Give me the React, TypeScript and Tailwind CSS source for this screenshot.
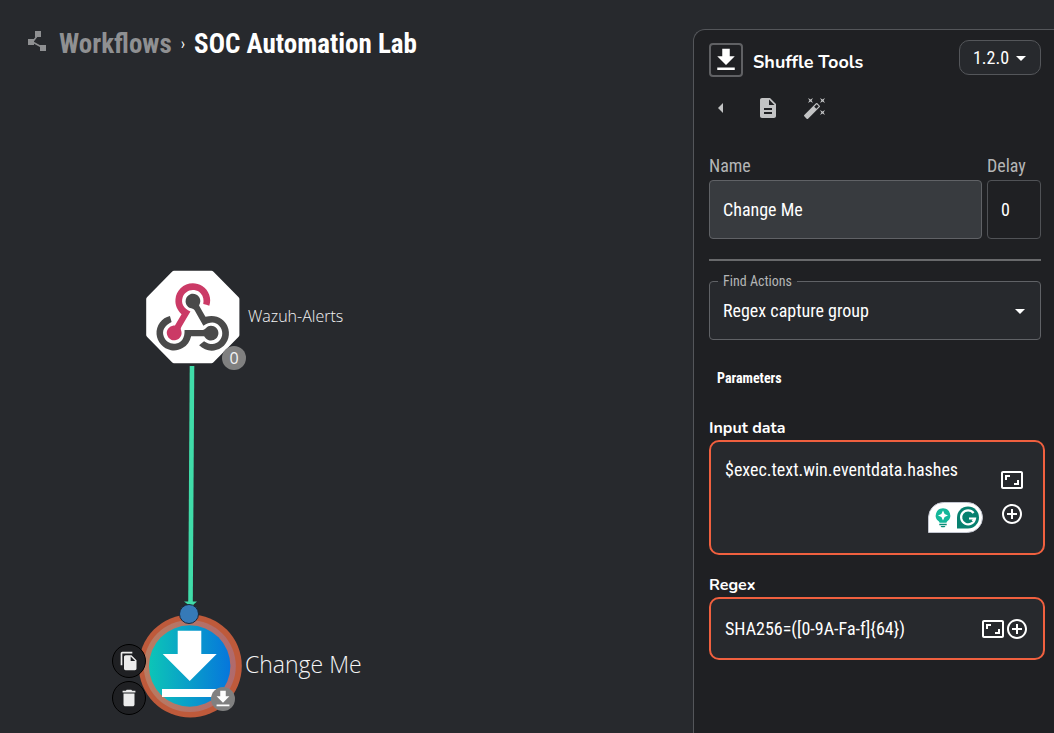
import type { ReactNode } from "react";
import {
  MdArrowDropDown,
  MdArrowLeft,
  MdAspectRatio,
  MdAutoFixHigh,
  MdControlPoint,
  MdDelete,
  MdDescription,
  MdFileCopy,
} from "react-icons/md";

function DownloadIcon({ className }: { className: string }) {
  return (
    <svg viewBox="0 0 24 24" fill="currentColor" className={className} aria-hidden="true">
      <path d="M5 20h14v-2H5v2zM19 9h-4V3H9v6H5l7 7 7-7z" />
    </svg>
  );
}

function WorkflowIcon() {
  return (
    <svg viewBox="0 0 18 20" fill="currentColor" className="h-5 w-[18px]" aria-hidden="true">
      <path d="M7 0h6v6H7zM0 8h6v6H0zM12 14h6v6h-6z" />
      <path d="M9.500 4.500 4.500 11l10 5.500" fill="none" stroke="currentColor" strokeWidth="1.500" />
    </svg>
  );
}

function WebhookNode() {
  return (
    <svg viewBox="0 0 94 94" className="size-[94px]" aria-hidden="true">
      <path
        d="M28 .8h37.500q1 0 2 1L92.400 27q1 1 1 2v36q0 1-1 2L67.500 92.300q-1 1-2 1H28q-1 0-2-1L1.200 67q-1-1-1-2V29q0-1 1-2L26 1.800q1-1 2-1z"
        fill="#fff"
      />
      <g transform="translate(10.5 13) scale(.284)">
        <path
          fill="#cb3a66"
          d="M119.54 100.503c-10.61 17.836-20.775 35.108-31.152 52.25-2.665 4.401-3.984 7.986-1.855 13.58 5.878 15.454-2.414 30.493-17.998 34.575-14.697 3.851-29.016-5.808-31.932-21.543-2.584-13.927 8.224-27.58 23.58-29.757 1.286-.184 2.6-.205 4.762-.367l23.358-39.168C73.612 95.465 64.868 78.39 66.803 57.23c1.368-14.957 7.25-27.883 18-38.477 20.59-20.288 52.002-23.573 76.246-8.001 23.284 14.958 33.948 44.094 24.858 69.031-6.854-1.858-13.756-3.732-21.343-5.79 2.854-13.865.743-26.315-8.608-36.981-6.178-7.042-14.106-10.733-23.12-12.093-18.072-2.73-35.815 8.88-41.08 26.618-5.976 20.13 3.069 36.575 27.784 48.967z"
        />
        <path
          fill="#4a4a4a"
          d="M149.841 79.41c7.475 13.187 15.065 26.573 22.587 39.836 38.02-11.763 66.686 9.284 76.97 31.817 12.422 27.219 3.93 59.457-20.465 76.25-25.04 17.238-56.707 14.293-78.892-7.851 5.654-4.733 11.336-9.487 17.407-14.566 21.912 14.192 41.077 13.524 55.305-3.282 12.133-14.337 11.87-35.714-.615-49.75-14.408-16.197-33.707-16.691-57.035-1.143-9.677-17.168-19.522-34.199-28.893-51.491-3.16-5.828-6.648-9.21-13.77-10.443-11.893-2.062-19.571-12.275-20.032-23.717-.453-11.316 6.214-21.545 16.634-25.53 10.322-3.949 22.435-.762 29.378 8.014 5.674 7.17 7.477 15.24 4.491 24.083-.83 2.466-1.905 4.852-3.07 7.774z"
        />
        <path
          fill="#4a4a4a"
          d="M167.707 187.21h-45.77c-4.387 18.044-13.863 32.612-30.19 41.876-12.693 7.2-26.373 9.641-40.933 7.29-26.808-4.323-48.728-28.456-50.658-55.63-2.184-30.784 18.975-58.147 47.178-64.293 1.947 7.071 3.915 14.21 5.862 21.264-25.876 13.202-34.832 29.836-27.59 50.636 6.375 18.304 24.484 28.337 44.147 24.457 20.08-3.962 30.204-20.65 28.968-47.432 19.036 0 38.088-.197 57.126.097 7.434.117 13.173-.654 18.773-7.208 9.22-10.784 26.191-9.811 36.121.374 10.148 10.409 9.662 27.158-1.077 37.127-10.361 9.62-26.73 9.106-36.424-1.26-1.992-2.136-3.562-4.673-5.533-7.298z"
        />
      </g>
    </svg>
  );
}

function ToolNode() {
  return (
    <svg viewBox="0 0 104 104" className="size-[104px]" aria-hidden="true">
      <defs>
        <linearGradient id="tool-fill" x1="0" x2="1" y1="0" y2="0">
          <stop offset="0" stopColor="#0cc5b7" />
          <stop offset="1" stopColor="#0676dc" />
        </linearGradient>
        <linearGradient id="tool-ring" x1="0" x2="1" y1="0" y2="0">
          <stop offset="0" stopColor="#b97c62" />
          <stop offset="1" stopColor="#b06a6c" />
        </linearGradient>
      </defs>
      <circle cx="52.3" cy="52" r="51.5" fill="#be5a3b" />
      <circle cx="51.8" cy="52" r="46" fill="url(#tool-ring)" />
      <circle cx="51.7" cy="52" r="40.7" fill="url(#tool-fill)" />
      <path d="M39.7 16.7h23.6V40h15.4L51.7 67 24.7 40h15zM24 75h54.7v8H24z" fill="#fff" />
    </svg>
  );
}

function Edge() {
  return (
    <svg viewBox="0 0 14 244" className="h-[244px] w-[14px]" aria-hidden="true">
      <path d="M8 0 6.500 238" stroke="#40dca9" strokeWidth="4.6" />
      <path d="M0 235.500h13l-3.500 3v4H4v-4z" fill="#40dca9" />
    </svg>
  );
}

function AssistantIcons() {
  return (
    <svg viewBox="0 0 56 32" className="h-8 w-14" aria-hidden="true">
      <path d="M.5 31.500V16A15 15 0 0 1 15.500 1.500H39.500a15 15 0 0 1 0 30z" fill="#fff" stroke="#c3c6d0" />
      <path
        d="M15 7.200a7.200 7.200 0 0 0-4.300 13c.5.400.8 1 .8 1.600h7c0-.6.300-1.200.8-1.600a7.200 7.200 0 0 0-4.300-13z"
        fill="#15b79a"
      />
      <path d="M15 9.500l1.600 3.400L20 14.500l-3.400 1.600L15 19.500l-1.600-3.400L10 14.500l3.400-1.600z" fill="#fff" />
      <path d="M11.300 22.800h7.400v1.400h-7.400zM12.500 25h5l-1 1.200h-3z" fill="#078a75" />
      <path d="M29 27.500V16.500A11 11 0 1 1 40 27.500z" fill="#07806f" />
      <path
        d="M45.600 12A7 7 0 1 0 47 17.500H41M47 17.500l-2.500 3"
        fill="none"
        stroke="#fff"
        strokeWidth="2.200"
      />
    </svg>
  );
}

function RoundAction({ label, children }: { label: string; children: ReactNode }) {
  return (
    <button
      type="button"
      aria-label={label}
      className="flex size-[34px] items-center justify-center rounded-full border border-black bg-[#1f2023] text-[#ececec]"
    >
      {children}
    </button>
  );
}

function Canvas() {
  return (
    <div className="absolute inset-0 font-['Open_Sans','Noto_Sans',sans-serif] text-[#f4f4f5]">
      <div className="absolute top-[366px] left-[184px]">
        <Edge />
      </div>
      <div className="absolute top-[270px] left-[146px]">
        <WebhookNode />
      </div>
      <div className="absolute top-[346px] left-[222px] flex size-6 items-center justify-center rounded-full bg-[#808080] text-base">
        0
      </div>
      <div className="absolute top-[304px] left-[248px] text-base font-light">Wazuh-Alerts</div>

      <div className="absolute top-[614px] left-[138px]">
        <ToolNode />
      </div>
      <div className="absolute top-[604px] left-[179px] size-5 rounded-full border border-[#18283a] bg-[#367ab8]" />
      <div className="absolute top-[687px] left-[211px] flex size-6 items-center justify-center rounded-full bg-[#808080] text-white">
        <DownloadIcon className="size-[22px]" />
      </div>
      <div className="absolute top-[644px] left-[112px] flex flex-col gap-[3px]">
        <RoundAction label="Duplicate node">
          <MdFileCopy className="size-5" />
        </RoundAction>
        <RoundAction label="Delete node">
          <MdDelete className="size-[22px]" />
        </RoundAction>
      </div>
      <div className="absolute top-[648px] left-[245px] text-[23px] leading-8 font-light">Change Me</div>
    </div>
  );
}

function IconButton({ label, children }: { label: string; children: ReactNode }) {
  return (
    <button type="button" aria-label={label} className="flex size-6 items-center justify-center">
      {children}
    </button>
  );
}

function ToolPanel() {
  return (
    <aside className="mt-[29px] w-[361px] shrink-0 rounded-tl-xl border-t border-l border-[#54565a] bg-[#1f2023] pt-[10px] pr-[13px] pl-[15px]">
      <header className="flex items-start">
        <div className="mt-[3px] flex size-[34px] items-center justify-center rounded border-2 border-[#606164]">
          <DownloadIcon className="size-[30px] shrink-0" />
        </div>
        <h2 className="mt-2 ml-[10px] font-['Nunito','Open_Sans',sans-serif] text-lg leading-7 font-bold">
          Shuffle Tools
        </h2>
        <button
          type="button"
          className="ml-auto flex h-[35px] w-[82px] items-center justify-center rounded-[10px] border border-[#54565a] bg-[#27292d] pl-[6px] text-lg"
        >
          1.2.0
          <MdArrowDropDown className="size-6" />
        </button>
      </header>

      <nav className="mt-[19px] flex gap-[23px] text-[#c2c3c4]">
        <IconButton label="Previous">
          <MdArrowLeft className="size-6" />
        </IconButton>
        <IconButton label="Documentation">
          <MdDescription className="size-6" />
        </IconButton>
        <IconButton label="Autocomplete">
          <MdAutoFixHigh className="size-6" />
        </IconButton>
      </nav>

      <div className="mt-8 flex gap-[5px] text-lg">
        <div className="min-w-0 flex-1">
          <label htmlFor="node-name" className="block leading-7 text-[#b4b5b6]">
            Name
          </label>
          <input
            id="node-name"
            defaultValue="Change Me"
            className="h-[59px] w-full rounded border border-[#606266] bg-[#383b3f] px-[13px]"
          />
        </div>
        <div className="w-[54px]">
          <label htmlFor="node-delay" className="block leading-7 text-[#b4b5b6]">
            Delay
          </label>
          <input
            id="node-delay"
            defaultValue="0"
            className="h-[59px] w-full rounded border border-[#505256] bg-transparent px-[13px]"
          />
        </div>
      </div>

      <hr className="mt-5 border-t-2 border-[#68696b]" />

      <div className="relative mt-5 h-[59px] rounded border border-[#606266] bg-[#27292d]">
        <label
          htmlFor="find-actions"
          className="absolute -top-[11px] left-2 bg-linear-to-b from-[#1f2023] from-50% to-[#27292d] to-50% px-[5px] text-sm text-[#b4b5b6]"
        >
          Find Actions
        </label>
        <select
          id="find-actions"
          defaultValue="regex"
          className="h-full w-full appearance-none bg-transparent px-[13px] text-lg"
        >
          <option value="regex">Regex capture group</option>
        </select>
        <MdArrowDropDown className="pointer-events-none absolute top-[17px] right-2 size-6" />
      </div>

      <h3 className="mt-7 ml-2 text-sm font-bold">Parameters</h3>

      <label
        htmlFor="input-data"
        className="mt-7 block font-['Nunito','Open_Sans',sans-serif] text-base font-bold"
      >
        Input data
      </label>
      <div className="relative -mr-1 flex h-[115px] rounded-[10px] border-2 border-[#f0603f] bg-[#27292d]">
        <textarea
          id="input-data"
          defaultValue="$exec.text.win.eventdata.hashes"
          className="min-w-0 flex-1 resize-none bg-transparent pt-[14px] pl-[14px] text-lg leading-7"
        />
        <div className="flex w-[43px] flex-col gap-[10px] pt-[26px]">
          <IconButton label="Expand input data">
            <MdAspectRatio className="size-6 shrink-0" />
          </IconButton>
          <IconButton label="Add variable to input data">
            <MdControlPoint className="size-6 shrink-0" />
          </IconButton>
        </div>
        <div className="absolute right-[59px] bottom-5">
          <AssistantIcons />
        </div>
      </div>

      <label
        htmlFor="regex"
        className="mt-[18px] block font-['Nunito','Open_Sans',sans-serif] text-base font-bold"
      >
        Regex
      </label>
      <div className="-mr-1 flex h-[63px] items-center rounded-[10px] border-2 border-[#f0603f] bg-[#27292d] pr-[14px]">
        <input
          id="regex"
          defaultValue="SHA256=([0-9A-Fa-f]{64})"
          className="h-full min-w-0 flex-1 bg-transparent pl-[14px] text-lg"
        />
        <IconButton label="Expand regex">
          <MdAspectRatio className="size-6 shrink-0" />
        </IconButton>
        <IconButton label="Add variable to regex">
          <MdControlPoint className="size-6 shrink-0" />
        </IconButton>
      </div>
    </aside>
  );
}

export default function App() {
  return (
    <div className="flex min-h-screen bg-[#27292d] font-['Roboto_Condensed','Liberation_Sans_Narrow',Roboto,sans-serif] text-white">
      <main className="relative min-w-0 flex-1">
        <Canvas />
        <nav className="relative flex items-start pt-[26px] pl-7 text-[27px] leading-9 font-bold">
          <span className="mt-[5px] mr-[13px] text-[#8f9092]">
            <WorkflowIcon />
          </span>
          <a href="#workflows" className="text-[#8f9092]">
            Workflows
          </a>
          <span className="mx-[9px] text-base leading-9 font-normal">›</span>
          <h1>SOC Automation Lab</h1>
        </nav>
      </main>
      <ToolPanel />
    </div>
  );
}
